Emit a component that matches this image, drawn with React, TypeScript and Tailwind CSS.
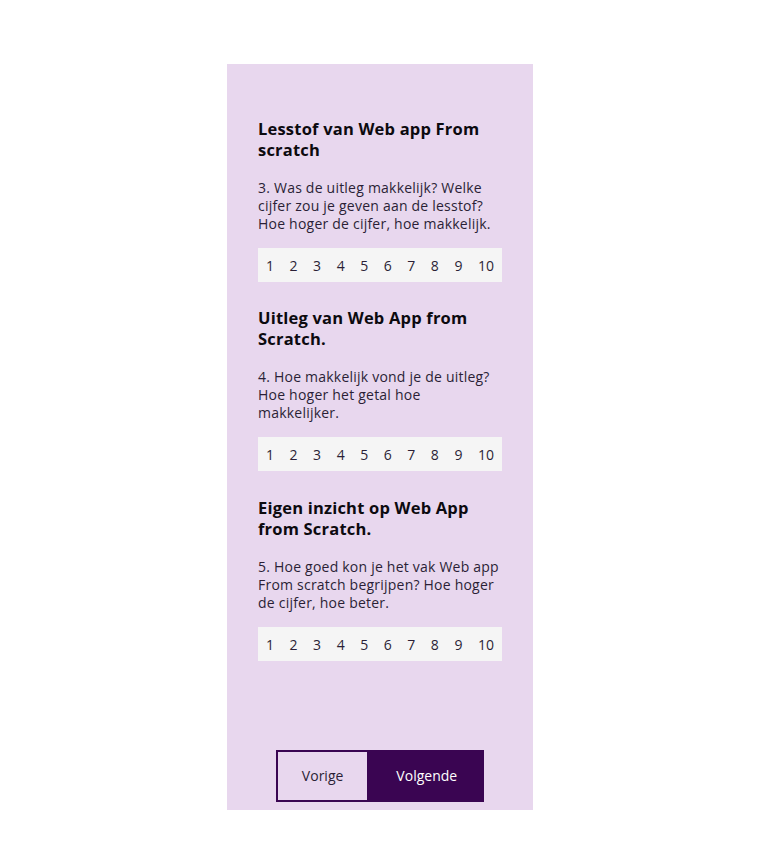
import React from 'react';

interface Question {
  title: string;
  text: string;
}

const questions: Question[] = [
  {
    title: 'Lesstof van Web app From scratch',
    text: '3. Was de uitleg makkelijk? Welke cijfer zou je geven aan de lesstof? Hoe hoger de cijfer, hoe makkelijk.',
  },
  {
    title: 'Uitleg van Web App from Scratch.',
    text: '4. Hoe makkelijk vond je de uitleg? Hoe hoger het getal hoe makkelijker.',
  },
  {
    title: 'Eigen inzicht op Web App from Scratch.',
    text: '5. Hoe goed kon je het vak Web app From scratch begrijpen? Hoe hoger de cijfer, hoe beter.',
  },
];

const scores = [1, 2, 3, 4, 5, 6, 7, 8, 9, 10];

const Scale: React.FC = () => (
  <div className="flex h-[34px] items-center justify-between bg-[#f5f5f5] px-[8px] text-[14px] text-[#2b1f36]">
    {scores.map((n) => (
      <span key={n}>{n}</span>
    ))}
  </div>
);

export default function App() {
  return (
    <div className="flex justify-center bg-white pt-16 pb-[47px] font-['Open_Sans',sans-serif]">
      <div className="flex w-[306px] flex-col bg-[#e8d7ee] px-[31px] pt-[54px] pb-2">
        {questions.map((q, i) => (
          <section key={i} className={i === 1 ? 'mt-[25px]' : i === 2 ? 'mt-[26px]' : ''}>
            <h2 className="pr-2 text-[16.5px] leading-[21px] font-bold tracking-[0.2px] text-[#0c0a0f]">{q.title}</h2>
            <p className="mt-[19px] text-[14px] leading-[18px] tracking-[0.22px] text-[#2b1f36]">{q.text}</p>
            <div className="mt-[15px]">
              <Scale />
            </div>
          </section>
        ))}
        <div className="mt-[89px] flex justify-center text-[14px]">
          <button className="border-2 border-[#3a0552] bg-transparent px-[24px] py-[14px] leading-5 text-[#2b1f36]">
            Vorige
          </button>
          <button className="border-2 border-[#3a0552] bg-[#3a0552] px-[25px] py-[14px] leading-5 text-white">
            Volgende
          </button>
        </div>
      </div>
    </div>
  );
}
